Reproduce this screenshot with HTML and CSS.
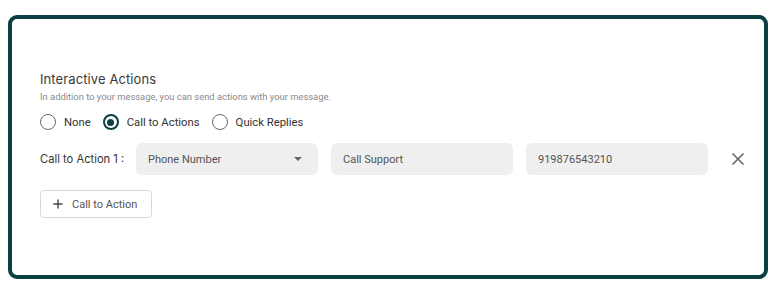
FILE: index.html
```html
<!DOCTYPE html>
<html>
<head>
<meta charset="utf-8">
<link rel="stylesheet" href="styles.css">
</head>
<body>
<div class="frame">
  <div class="section">
    <div class="title">Interactive Actions</div>
    <div class="subtitle">In addition to your message, you can send actions with your message.</div>
    <div class="radios">
      <label class="radio"><span class="circle"></span><span>None</span></label>
      <label class="radio"><span class="circle checked"></span><span>Call to Actions</span></label>
      <label class="radio"><span class="circle"></span><span>Quick Replies</span></label>
    </div>
    <div class="cta-row">
      <div class="cta-label">Call to Action 1 :</div>
      <div class="field select"><span>Phone Number</span><span class="caret"></span></div>
      <div class="field">Call Support</div>
      <div class="field">919876543210</div>
      <svg class="close" width="14" height="14" viewBox="0 0 14 14"><path d="M1.5 1.5L12.5 12.5M12.5 1.5L1.5 12.5" stroke="#666" stroke-width="1.6" fill="none"/></svg>
    </div>
    <button class="add-btn"><svg width="10" height="10" viewBox="0 0 10 10"><path d="M5 0.5V9.5M0.5 5H9.5" stroke="#444" stroke-width="1.4"/></svg><span>Call to Action</span></button>
  </div>
</div>
</body>
</html>
```
FILE: styles.css
```css
* { box-sizing: border-box; }
body {
  margin: 15px 16px 16px 8px;
  background: #fff;
  font-family: Roboto, "Liberation Sans", sans-serif;
}
.frame {
  width: 760px;
  height: 264px;
  border: 4px solid #0b3f44;
  border-radius: 9px;
  padding: 52px 0 0 28px;
}
.title {
  font-family: Inter, "Liberation Sans", sans-serif;
  font-size: 13px;
  color: #3a3a3a;
  line-height: 16px;
  letter-spacing: 0.1px;
}
.subtitle {
  font-size: 9.4px;
  color: #8a8a8a;
  margin-top: 4px;
  line-height: 12px;
}
.radios {
  display: flex;
  align-items: center;
  margin-top: 8px;
  height: 22px;
}
.radio {
  display: flex;
  align-items: center;
  font-size: 11.3px;
  color: #333;
  margin-right: 12px;
}
.radio .circle {
  width: 16px;
  height: 16px;
  border: 1.6px solid #6a6a6a;
  border-radius: 50%;
  margin-right: 8px;
  display: inline-block;
  position: relative;
}
.radio .circle.checked {
  border-color: #0b3f44;
  border-width: 2px;
}
.radio .circle.checked::after {
  content: "";
  position: absolute;
  left: 2.5px;
  top: 2.5px;
  width: 7px;
  height: 7px;
  border-radius: 50%;
  background: #0b3f44;
}
.cta-row {
  display: flex;
  align-items: center;
  margin-top: 10px;
}
.cta-label {
  font-family: Inter, "Liberation Sans", sans-serif;
  font-size: 11.2px;
  color: #333;
  width: 96px;
}
.field {
  width: 182px;
  height: 32px;
  background: #efefef;
  border-radius: 6px;
  margin-right: 13px;
  padding: 0 12px;
  display: flex;
  align-items: center;
  font-size: 11px;
  color: #555;
}
.select {
  justify-content: space-between;
}
.caret {
  width: 0;
  height: 0;
  border-left: 4.5px solid transparent;
  border-right: 4.5px solid transparent;
  border-top: 4.5px solid #666;
  margin-right: 4px;
}
.close {
  margin-left: 10px;
}
.add-btn {
  margin-top: 15px;
  width: 112px;
  height: 28px;
  border: 1px solid #d8d8d8;
  border-radius: 4px;
  background: #fff;
  display: flex;
  align-items: center;
  padding: 0 0 0 12px;
  font-family: Roboto, "Liberation Sans", sans-serif;
  font-size: 11px;
  color: #555;
}
.add-btn svg { margin-right: 9px; }
```
